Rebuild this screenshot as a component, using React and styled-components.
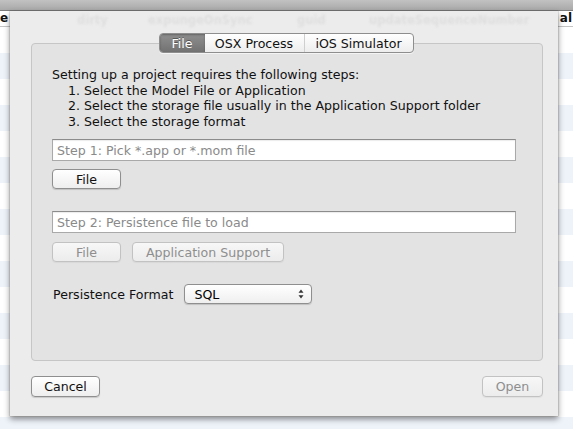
import styled, { createGlobalStyle } from 'styled-components';

const GlobalStyle = createGlobalStyle`
  html, body {
    margin: 0;
    padding: 0;
    background: #ffffff;
  }
  body {
    font-family: "DejaVu Sans", "Liberation Sans", sans-serif;
  }
`;

const Window = styled.div`
  position: relative;
  width: 573px;
  height: 429px;
  overflow: hidden;
  background: #ffffff;
`;

const Toolbar = styled.div`
  height: 10px;
  background: linear-gradient(#c2c2c2, #a9a9a9);
  border-bottom: 1px solid #7d7d7d;
`;

const HeaderRow = styled.div`
  height: 15px;
  display: flex;
  justify-content: space-between;
  align-items: center;
  padding: 0 1px 0 0;
  border-bottom: 1px solid #c4c4c4;
  font-size: 12px;
  font-weight: bold;
  color: #111;
  line-height: 15px;
`;

const Row = styled.div`
  height: 26px;
  background: ${(p) => (p.$odd ? '#eef3fa' : '#ffffff')};
`;

const Sheet = styled.div`
  position: absolute;
  left: 10px;
  top: 11px;
  width: 548px;
  height: 405px;
  box-sizing: border-box;
  padding: 0 15px 0 21px;
  display: flex;
  flex-direction: column;
  background: #ececec;
  box-shadow: 0 3px 6px rgba(0, 0, 0, 0.45), 0 0 1px rgba(0, 0, 0, 0.5);
`;

// column titles of the table, showing faintly through the sheet
const GhostRow = styled.div`
  height: 32px;
  display: flex;
  align-items: flex-start;
  padding: 2px 0 0 46px;
  box-sizing: border-box;
  white-space: nowrap;
  font-size: 11.5px;
  font-weight: bold;
  color: #dedede;
  filter: blur(0.9px);
  line-height: 14px;
`;

const Ghost = styled.span`
  flex: 0 0 ${(p) => (p.$w ? `${p.$w}px` : 'auto')};
`;

const TabBox = styled.div`
  height: 318px;
  box-sizing: border-box;
  border: 1px solid #c6c6c6;
  border-radius: 4px;
  background: #e3e3e3;
  display: flex;
  flex-direction: column;
  padding: 0 26px 0 20px;
`;

const Segments = styled.div`
  align-self: center;
  margin: -11px 0 0 4px;
  display: flex;
  height: 20px;
  box-sizing: border-box;
  border: 1px solid #8e8e8e;
  border-radius: 4px;
  overflow: hidden;
  background: linear-gradient(#ffffff, #ededed);
  box-shadow: 0 1px 0 rgba(255, 255, 255, 0.6);
`;

const Segment = styled.div`
  width: ${(p) => p.$w}px;
  display: flex;
  align-items: center;
  justify-content: center;
  font-size: 12.6px;
  color: ${(p) => (p.$active ? '#ffffff' : '#111111')};
  background: ${(p) => (p.$active ? 'linear-gradient(#8f8f8f, #727272)' : 'transparent')};
  text-shadow: ${(p) => (p.$active ? '0 -1px 0 rgba(0,0,0,0.35)' : 'none')};
  border-left: ${(p) => (p.$divider ? '1px solid #cfcfcf' : 'none')};
  box-shadow: ${(p) => (p.$active ? 'inset 0 1px 2px rgba(0,0,0,0.3)' : 'none')};
`;

const Intro = styled.div`
  margin-top: 14px;
  font-size: 12.6px;
  line-height: 15.5px;
  color: #111;
`;

const Step = styled.div`
  padding-left: 16px;
`;

const Field = styled.div`
  margin-top: ${(p) => p.$mt}px;
  height: 22px;
  box-sizing: border-box;
  border: 1px solid #a9a9a9;
  border-top-color: #8c8c8c;
  background: #ffffff;
  box-shadow: inset 0 1px 1px rgba(0, 0, 0, 0.08);
  display: flex;
  align-items: center;
  padding-left: 4px;
  font-size: 12.6px;
  color: #8a8a8a;
`;

const ButtonRow = styled.div`
  margin-top: ${(p) => p.$mt}px;
  display: flex;
  gap: 11px;
`;

const Button = styled.div`
  width: ${(p) => p.$w}px;
  height: ${(p) => p.$h || 20}px;
  box-sizing: border-box;
  border: 1px solid ${(p) => (p.$disabled ? '#c2c2c2' : '#8f8f8f')};
  border-radius: 4px;
  background: ${(p) => (p.$disabled ? 'linear-gradient(#f7f7f7, #ececec)' : 'linear-gradient(#ffffff, #eeeeee)')};
  box-shadow: 0 1px 1px rgba(0, 0, 0, ${(p) => (p.$disabled ? 0.05 : 0.15)});
  display: flex;
  align-items: center;
  justify-content: center;
  font-size: 12.6px;
  color: ${(p) => (p.$disabled ? '#8e8e8e' : '#111111')};
`;

const FormatRow = styled.div`
  margin-top: 22px;
  display: flex;
  align-items: center;
  gap: 11px;
  padding-left: 1px;
  font-size: 12.6px;
  color: #111;
`;

const Popup = styled.div`
  width: 128px;
  height: 20px;
  box-sizing: border-box;
  border: 1px solid #8f8f8f;
  border-radius: 4px;
  background: linear-gradient(#ffffff, #efefef);
  box-shadow: 0 1px 1px rgba(0, 0, 0, 0.15);
  display: flex;
  align-items: center;
  justify-content: space-between;
  padding: 0 7px 0 9px;
  font-size: 12.6px;
  font-weight: 500;
  color: #000;
`;

const Footer = styled.div`
  margin-top: 15px;
  display: flex;
  justify-content: space-between;
`;

const Arrows = () => (
  <svg width="6" height="10" viewBox="0 0 6 10">
    <path d="M3 0.5 L5.5 3.8 H0.5 Z" fill="#333" />
    <path d="M3 9.5 L5.5 6.2 H0.5 Z" fill="#333" />
  </svg>
);

const rows = Array.from({ length: 16 }, (_, i) => i);

export default function App() {
  return (
    <Window>
      <GlobalStyle />
      <Toolbar />
      <HeaderRow>
        <span>e</span>
        <span>al</span>
      </HeaderRow>
      {rows.map((i) => (
        <Row key={i} $odd={i % 2 === 1} />
      ))}

      <Sheet>
        <GhostRow>
          <Ghost $w={71}>dirty</Ghost>
          <Ghost $w={149}>expungeOnSync</Ghost>
          <Ghost $w={72}>guid</Ghost>
          <Ghost>updateSequenceNumber</Ghost>
        </GhostRow>

        <TabBox>
          <Segments>
            <Segment $w={45} $active>File</Segment>
            <Segment $w={99}>OSX Process</Segment>
            <Segment $w={108} $divider>iOS Simulator</Segment>
          </Segments>

          <Intro>
            Setting up a project requires the following steps:
            <Step>1. Select the Model File or Application</Step>
            <Step>2. Select the storage file usually in the Application Support folder</Step>
            <Step>3. Select the storage format</Step>
          </Intro>

          <Field $mt={10}>Step 1: Pick *.app or *.mom file</Field>
          <ButtonRow $mt={8}>
            <Button $w={69}>File</Button>
          </ButtonRow>

          <Field $mt={22}>Step 2: Persistence file to load</Field>
          <ButtonRow $mt={9}>
            <Button $w={69} $disabled>File</Button>
            <Button $w={152} $disabled>Application Support</Button>
          </ButtonRow>

          <FormatRow>
            <span>Persistence Format</span>
            <Popup>
              <span>SQL</span>
              <Arrows />
            </Popup>
          </FormatRow>
        </TabBox>

        <Footer>
          <Button $w={69} $h={21}>Cancel</Button>
          <Button $w={61} $h={21} $disabled>Open</Button>
        </Footer>
      </Sheet>
    </Window>
  );
}
